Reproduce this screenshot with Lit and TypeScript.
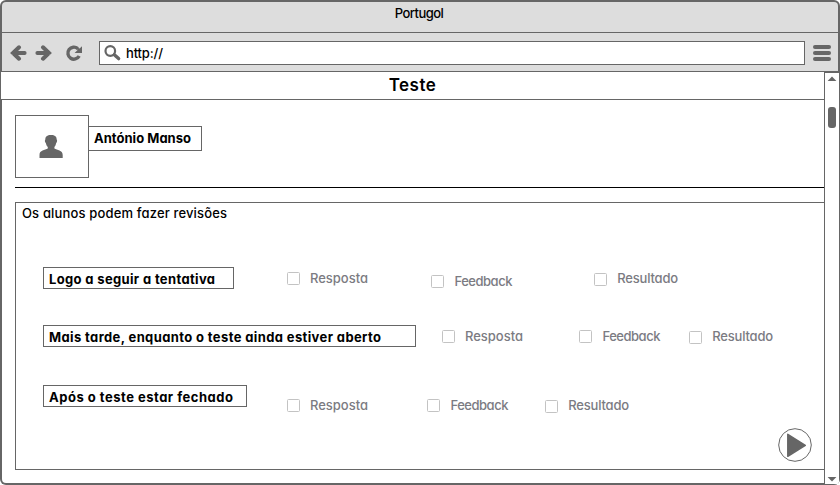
import { LitElement, html, css, svg } from "lit";
import { customElement, property } from "lit/decorators.js";
import { styleMap } from "lit/directives/style-map.js";

/** A line of text whose tracking is adjusted so that it fills a given width. */
@customElement("fit-text")
class FitText extends LitElement {
  static styles = css`
    :host { display: block; white-space: pre; height: 20px; line-height: 20px; }
    .run { display: inline-block; }
  `;
  @property() text = "";
  @property({ type: Number }) width = 0;

  render() {
    return html`<span class="run">${this.text}</span>`;
  }

  updated() {
    const run = this.renderRoot.querySelector<HTMLElement>(".run")!;
    run.style.letterSpacing = "0";
    const natural = run.getBoundingClientRect().width;
    run.style.letterSpacing = `${(this.width - natural) / (this.text.length - 1)}px`;
  }
}

@customElement("check-option")
class CheckOption extends LitElement {
  static styles = css`
    :host { display: flex; height: 20px; color: #7b7b82; }
    .box { box-sizing: border-box; width: 13px; height: 13px; border: 1px solid #c3c3c3; border-radius: 1.5px; background: #fff; margin-right: 10.5px; }
  `;
  @property() label = "";
  @property({ type: Number }) width = 0;
  @property({ type: Number }) drop = 4;

  render() {
    return html`
      <span class="box" style=${styleMap({ marginTop: `${this.drop}px` })}></span>
      <fit-text .text=${this.label} .width=${this.width}></fit-text>
    `;
  }
}

interface Option { label: string; width: number; gap: number; top: number; drop: number; }
interface Row { kind: string; text: string; width: number; options: Option[]; }

const rows: Row[] = [
  { kind: "first", text: "Logo a seguir a tentativa", width: 166, options: [
    { label: "Resposta", width: 58, gap: 53, top: 1, drop: 4 },
    { label: "Feedback", width: 58, gap: 63, top: 4, drop: 4 },
    { label: "Resultado", width: 61, gap: 82, top: 1, drop: 5 },
  ] },
  { kind: "second", text: "Mais tarde, enquanto o teste ainda estiver aberto", width: 332, options: [
    { label: "Resposta", width: 58, gap: 26, top: 1, drop: 4 },
    { label: "Feedback", width: 58, gap: 56, top: 1, drop: 4 },
    { label: "Resultado", width: 61, gap: 29, top: 1, drop: 5 },
  ] },
  { kind: "third", text: "Após o teste estar fechado", width: 184, options: [
    { label: "Resposta", width: 58, gap: 40, top: 10, drop: 4 },
    { label: "Feedback", width: 58, gap: 59, top: 10, drop: 4 },
    { label: "Resultado", width: 61, gap: 37, top: 10, drop: 5 },
  ] },
];

const arrow = svg`<path d="M3 8H14.6M9 2.3L3 8L9 13.7" fill="none" stroke="#666" stroke-width="4" stroke-linecap="round" stroke-linejoin="miter"/>`;

@customElement("app-root")
class AppRoot extends LitElement {
  static styles = css`
    :host { display: block; width: 840px; height: 485px; overflow: hidden; font: 450 13px Inter, "Noto Sans", sans-serif; font-feature-settings: "cv11"; color: #000; }
    * { box-sizing: border-box; }
    svg { display: block; }
    .window { display: flex; flex-direction: column; height: 485px; background: #666; border-radius: 6px; overflow: hidden; padding-top: 2px; }
    .titlebar { height: 31px; margin: 0 2px; background: #ddd; border-bottom: 1px solid #666; border-radius: 4px 4px 0 0; display: flex; justify-content: center; padding-top: 1px; }
    .titlebar fit-text { margin-right: 2px; }
    .toolbar { height: 38px; margin: 0 2px; background: #ddd; display: flex; align-items: flex-start; padding: 8px 7px 0 8px; }
    .back, .forward { width: 17px; height: 16px; margin-top: 4px; }
    .forward { margin-left: 8px; transform: scaleX(-1); }
    .reload { margin: 3px 0 0 13px; }
    .address { height: 24px; width: 706px; margin-left: 16px; border: 1px solid #666; background: #fff; display: flex; padding: 3px 0 0 4px; }
    .address fit-text { margin-left: 5px; margin-top: -2px; }
    .menu { width: 18px; margin: 4px 0 0 8px; display: flex; flex-direction: column; gap: 2px; }
    .menu span { height: 4px; background: #666; border-radius: 2px; }
    .view { flex: 1; display: flex; }
    .page { width: 824px; display: flex; flex-direction: column; }
    .heading { height: 29px; border: solid #666; border-width: 1px 0 1px 1px; background: #fff; display: flex; justify-content: center; padding-top: 3px; font-size: 17px; font-weight: 600; }
    .body { flex: 1; margin: 0 0 2px 2px; background: #fff; border-radius: 0 0 0 4px; padding: 15px 0 0 13px; }
    .user { display: flex; align-items: flex-start; height: 72px; }
    .avatar { width: 74px; height: 63px; border: 1px solid #666; padding: 18px 0 0 23px; }
    .name { width: 114px; height: 25px; margin: 11px 0 0 -1px; border: 1px solid #666; padding: 1px 0 0 5px; font-weight: 650; }
    .rule { height: 1px; background: #000; }
    .panel { margin-top: 14px; height: 268px; border: 1px solid #666; border-right: 0; display: flex; flex-direction: column; }
    .caption { height: 64px; padding: 0 0 0 6px; }
    .row { display: flex; align-items: flex-start; padding-left: 27px; }
    .row.first { height: 58px; }
    .row.second { height: 60px; }
    .row.third { height: 43px; }
    .tag { height: 22px; border: 1px solid #666; padding: 1px 0 0 5px; font-weight: 650; flex: none; }
    .first .tag { width: 191px; }
    .second .tag { width: 373px; }
    .third .tag { width: 204px; }
    .option { flex: none; }
    .actions { display: flex; justify-content: flex-end; padding-right: 12px; }
    .scroll { width: 16px; margin-top: 1px; height: 413px; background: #fff; border: 1px solid #666; display: flex; flex-direction: column; align-items: center; }
    .up { margin-top: 3px; }
    .thumb { width: 8px; height: 21px; border-radius: 3px; background: #666; margin-top: 26px; }
    .down { margin-top: auto; margin-bottom: 2px; }
  `;

  private renderRow(row: Row) {
    return html`
      <div class="row ${row.kind}">
        <div class="tag"><fit-text .text=${row.text} .width=${row.width}></fit-text></div>
        ${row.options.map((o) => html`
          <check-option class="option" style=${styleMap({ marginLeft: `${o.gap}px`, marginTop: `${o.top}px`, width: `${o.width + 23}px` })}
            .label=${o.label} .width=${o.width} .drop=${o.drop}></check-option>`)}
      </div>
    `;
  }

  render() {
    return html`
      <div class="window">
        <div class="titlebar"><fit-text text="Portugol" width="49"></fit-text></div>
        <div class="toolbar">
          <svg class="back" viewBox="0 0 17 16">${arrow}</svg>
          <svg class="forward" viewBox="0 0 17 16">${arrow}</svg>
          <svg class="reload" width="18" height="18" viewBox="0 0 18 18">
            <path d="M12.8 4.6A6 6 0 1 0 14.2 12" fill="none" stroke="#666" stroke-width="3.4"/>
            <path d="M17 2.2V9H9.6L12.4 6.2L11.6 3.2L14.6 4.4Z" fill="#666"/>
          </svg>
          <div class="address">
            <svg width="17" height="16" viewBox="0 0 17 16">
              <circle cx="6.3" cy="6" r="4.8" fill="none" stroke="#666" stroke-width="2.2"/>
              <path d="M10.3 9.8L14.6 13.6" stroke="#666" stroke-width="3.4" stroke-linecap="round"/>
            </svg>
            <fit-text text="http://" width="37"></fit-text>
          </div>
          <div class="menu"><span></span><span></span><span></span></div>
        </div>
        <div class="view">
          <div class="page">
            <div class="heading"><fit-text text="Teste" width="47"></fit-text></div>
            <div class="body">
              <div class="user">
                <div class="avatar">
                  <svg width="25" height="25" viewBox="0 0 25 25">
                    <path d="M6.3 5.5C6.3 2.5 8 1 12 1S17.7 2.5 17.7 5.5C18.4 6 18.2 8.3 17.2 9C16.8 11 16.2 12 15.4 13V14.5C18 16.1 23.7 16 23.7 21V24H.5V21C.5 16 6 16.1 8.8 14.5V13C7.8 12 7.3 11 6.8 9C5.8 8.3 5.6 6 6.3 5.5Z" fill="#666"/>
                  </svg>
                </div>
                <div class="name"><fit-text text="António Manso" width="97"></fit-text></div>
              </div>
              <div class="rule"></div>
              <div class="panel">
                <div class="caption"><fit-text text="Os alunos podem fazer revisões" width="205"></fit-text></div>
                ${rows.map((row) => this.renderRow(row))}
                <div class="actions">
                  <svg width="34" height="34" viewBox="0 0 34 34">
                    <circle cx="17" cy="17" r="16.3" fill="#fff" stroke="#666" stroke-width="1"/>
                    <path d="M9.8 6.3L27.3 17.3L9.8 28.3Z" fill="#666" stroke="#666" stroke-width="1.5" stroke-linejoin="round"/>
                  </svg>
                </div>
              </div>
            </div>
          </div>
          <div class="scroll">
            <svg class="up" width="10" height="5" viewBox="0 0 10 5"><path d="M5 .4L9.4 5H.6Z" fill="#666"/></svg>
            <div class="thumb"></div>
            <svg class="down" width="10" height="5" viewBox="0 0 10 5"><path d="M5 4.6L9.4 0H.6Z" fill="#666"/></svg>
          </div>
        </div>
      </div>
    `;
  }
}
